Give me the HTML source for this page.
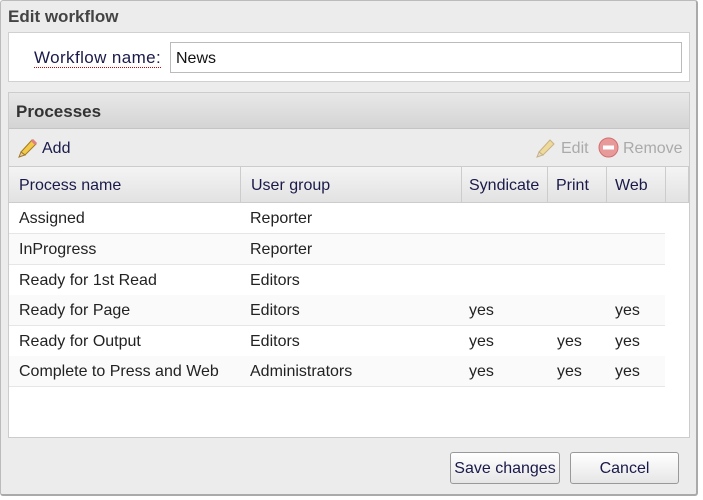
<!DOCTYPE html>
<html><head><style>
*{box-sizing:border-box;margin:0;padding:0}
body{width:703px;height:500px;background:#fff;font-family:"Liberation Sans",sans-serif;font-size:16px;color:#222;position:relative;overflow:hidden}
.dlg{position:absolute;left:0;top:0;width:698px;height:496px;background:#ececec;border:1px solid #bbb;border-radius:3px;border-right:2px solid #aaa;border-bottom:2px solid #aaa}
.abs{position:absolute}
.title{left:8px;top:7px;font-weight:bold;font-size:17px;color:#444}
.p1{left:8px;top:32px;width:682px;height:50px;background:#fff;border:1px solid #d0d0d0}
.lbl{left:34px;top:48px;font-size:17px;letter-spacing:0.4px;color:#1a1a4a;border-bottom:1px dotted #c00;line-height:19px}
.inp{left:170px;top:42px;width:512px;height:31px;border:1px solid #bbb;background:#fff;font-size:16px;padding:7px 5px;color:#111}
.p2{left:8px;top:92px;width:682px;height:346px;background:#fff;border:1px solid #ccc}
.hdr{left:9px;top:93px;width:680px;height:36px;background:linear-gradient(#e8e8e8,#d4d4d4);border-bottom:1px solid #c4c4c4;font-weight:bold;font-size:17px;padding:9px 7px;color:#333}
.tb{left:9px;top:129px;width:680px;height:38px;background:#ececec;border-bottom:1px solid #ccc}
.ch{top:167px;height:36px;background:linear-gradient(#f4f4f4,#e2e2e2);border-right:1px solid #ccc;border-bottom:1px solid #ccc;padding:10px 10px;font-size:16px;color:#1a1a4a;white-space:nowrap}
.row{left:9px;width:656px;height:31px;border-bottom:1px solid #e6e6e6}
.c{position:absolute;top:7px;font-size:16px;color:#222;white-space:nowrap}
.btn{top:452px;height:32px;border:1px solid #999;border-radius:3px;background:linear-gradient(#fff,#e6e6e6);font-size:16px;color:#1a1a4a;text-align:center;line-height:31px}
</style></head><body>
<div class="dlg"></div>
<div class="abs title">Edit workflow</div>
<div class="abs p1"></div>
<div class="abs lbl">Workflow name:</div>
<div class="abs inp">News</div>
<div class="abs p2"></div>
<div class="abs hdr">Processes</div>
<div class="abs tb"></div>
<svg class="abs" style="left:17px;top:137px" width="22" height="22" viewBox="0 0 22 22"><path d="M4 15 L15 3 L19 7 L8 18 Z" fill="#f3c94a" stroke="#a07820"/><path d="M4 15 L2 20 L8 18 Z" fill="#e8c9a0" stroke="#a07820"/><path d="M15 3 L19 7" stroke="#e08080" stroke-width="3"/></svg>
<div class="abs" style="left:42px;top:140px;color:#1a1a4a">Add</div>
<svg class="abs" style="left:535px;top:137px;opacity:.5" width="22" height="22" viewBox="0 0 22 22"><path d="M4 15 L15 3 L19 7 L8 18 Z" fill="#f3c94a" stroke="#a07820"/><path d="M4 15 L2 20 L8 18 Z" fill="#e8c9a0" stroke="#a07820"/></svg>
<div class="abs" style="left:561px;top:140px;color:#aaa">Edit</div>
<svg class="abs" style="left:598px;top:137px" width="21" height="21" viewBox="0 0 21 21"><circle cx="10.5" cy="10.5" r="9.5" fill="#e89a9a" stroke="#d07070"/><rect x="5" y="8.5" width="11" height="4" fill="#fff"/></svg>
<div class="abs" style="left:623px;top:140px;color:#aaa">Remove</div>
<div class="abs ch" style="left:9px;width:232px">Process name</div>
<div class="abs ch" style="left:241px;width:221px">User group</div>
<div class="abs ch" style="left:462px;width:86px;padding-left:7px">Syndicate</div>
<div class="abs ch" style="left:548px;width:59px;padding-left:8px">Print</div>
<div class="abs ch" style="left:607px;width:59px;padding-left:8px">Web</div>
<div class="abs ch" style="left:666px;width:23px"></div>
<div class="abs row" style="top:203px;background:#fff"><span class="c" style="left:10px">Assigned</span><span class="c" style="left:241px">Reporter</span></div>
<div class="abs row" style="top:234px;background:#fafafa"><span class="c" style="left:10px">InProgress</span><span class="c" style="left:241px">Reporter</span></div>
<div class="abs row" style="top:265px;background:#fff"><span class="c" style="left:10px">Ready for 1st Read</span><span class="c" style="left:241px">Editors</span></div>
<div class="abs row" style="top:295px;background:#fafafa"><span class="c" style="left:10px">Ready for Page</span><span class="c" style="left:241px">Editors</span><span class="c" style="left:460px">yes</span><span class="c" style="left:606px">yes</span></div>
<div class="abs row" style="top:326px;background:#fff"><span class="c" style="left:10px">Ready for Output</span><span class="c" style="left:241px">Editors</span><span class="c" style="left:460px">yes</span><span class="c" style="left:548px">yes</span><span class="c" style="left:606px">yes</span></div>
<div class="abs row" style="top:356px;background:#fafafa"><span class="c" style="left:10px">Complete to Press and Web</span><span class="c" style="left:241px">Administrators</span><span class="c" style="left:460px">yes</span><span class="c" style="left:548px">yes</span><span class="c" style="left:606px">yes</span></div>
<div class="abs btn" style="left:450px;width:110px">Save changes</div>
<div class="abs btn" style="left:570px;width:109px">Cancel</div>
</body></html>
